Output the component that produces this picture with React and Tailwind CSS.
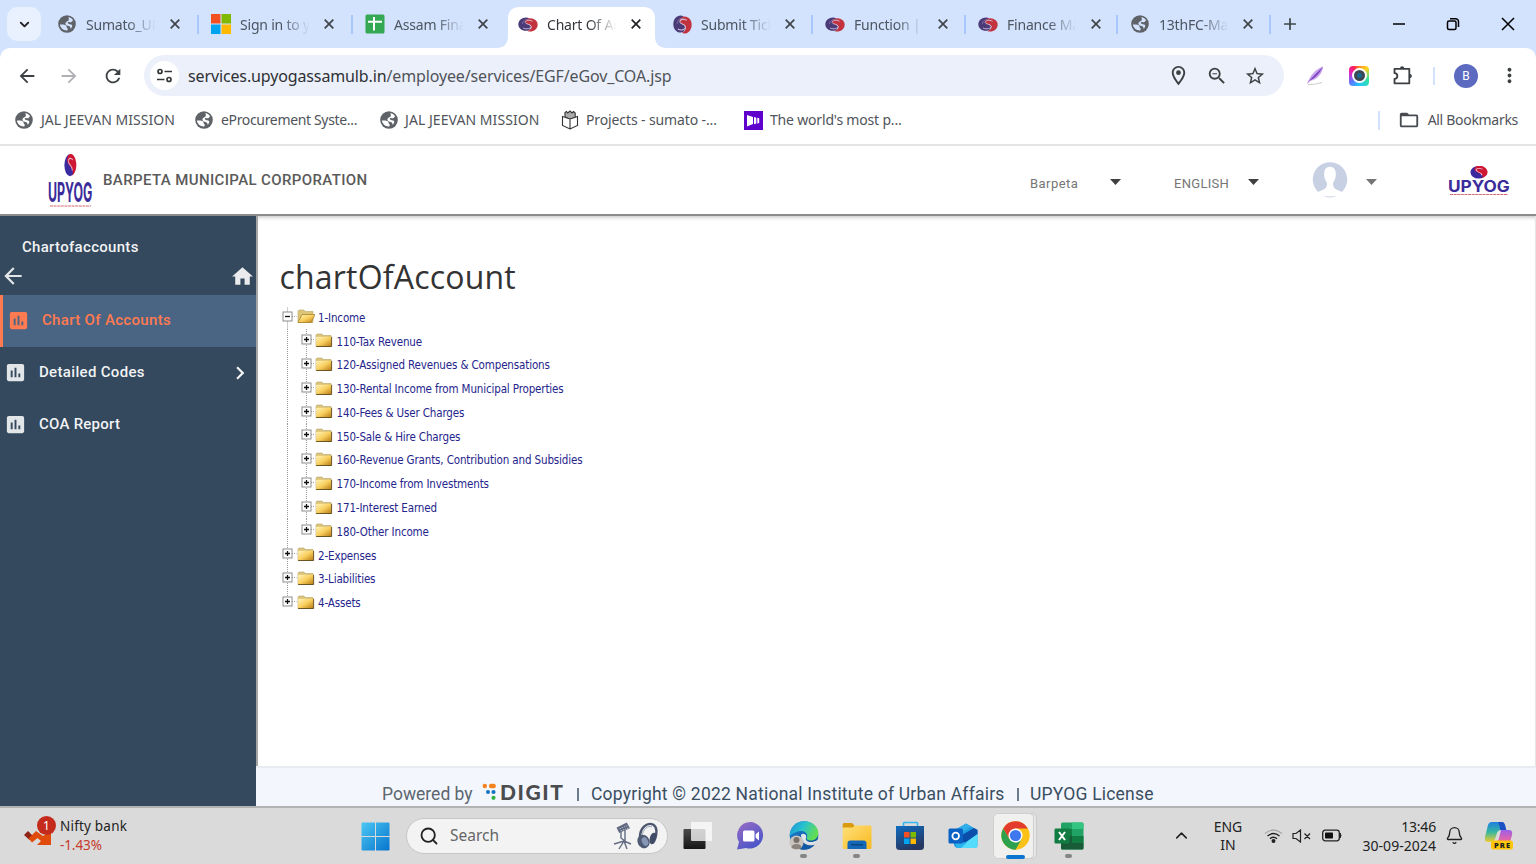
import React from 'react';
import {
  MdArrowBack, MdArrowForward, MdRefresh, MdStarBorder, MdZoomOut,
  MdOutlineLocationOn, MdFolderOpen, MdMoreVert, MdAssessment, MdHome, MdChevronRight,
} from 'react-icons/md';
import { Bell, ChevronDown, ChevronUp, Search, Plus } from 'lucide-react';

/* ---------- shared drawings ---------- */

function Globe({ bg }) {
  return (
    <svg className="size-[18px] shrink-0" viewBox="0 0 18 18">
      <circle cx="9" cy="9" r="8.800" fill="#5f6368" />
      <path d="M1.900 9.600C4 9.500 6.500 9.300 8 10.500c.8.800.3 1.700 1 2.300.9.700 1 1.600.3 2.600-3.800.3-7-2.200-7.400-5.800Z" fill={bg} />
      <path d="M10.500 2.100c2.100.5 3.700 1.700 4.700 3.400-1 .3-1.300 1.500-2.300 1.700-1.200.1-1.600-.6-2.600-.1-.9.500-.5 1.500.6 1.800 1.500.4 3 .3 3.300 1.500.2 1.200-.7 2.600-1.700 3.400.1-1.300-.3-2.200-1.400-2.500-1.800-.4-3.600-.9-3.700-2.700 0-1.300.9-1.900 1.900-2.400 1-.5 1.700-1.200 1.500-2.300Z" fill={bg} />
    </svg>
  );
}

function Swirl({ className }) {
  return (
    <svg className={className} viewBox="0 0 20 16" preserveAspectRatio="none">
      <path d="M11 1.200C8.600-.3 4.800.4 2.500 2.600-.3 5.300-.4 10 2.300 12.600c2.400 2.400 6.600 2.800 9 1.200l2-3.300-4-4.500Z" fill="#4b3a78" />
      <path d="M9.500 14.800c1.900 1.500 5.700.8 8-1.400 2.800-2.700 2.900-7.400.2-10C15.300 1 11.100.6 8.700 2.200 6.800 3.500 6.500 5.700 8.100 6.900c1.900 1.400 5 1.100 5.400 3.400.3 1.900-1.500 3.800-4 4.500Z" fill="#c2333f" />
      <path d="M14.500 4.500C11.500 2.800 7 3.600 7.200 5.900c.2 2 5.700 1.400 5.900 4.100.2 2.200-4.600 3.500-8 1.800" fill="none" stroke="#d9c6df" strokeWidth=".9" />
      <path d="M12 3.200C8 1.700 4 4.500 4.500 7.500" fill="none" stroke="#8d7fae" strokeWidth=".7" />
    </svg>
  );
}

function Microsoft() {
  return (
    <svg className="size-5" viewBox="0 0 20 20">
      <path fill="#f25022" d="M0 0h9.500v9.500H0z" />
      <path fill="#7fba00" d="M10.500 0H20v9.500h-9.500z" />
      <path fill="#00a4ef" d="M0 10.500h9.500V20H0z" />
      <path fill="#ffb900" d="M10.500 10.500H20V20h-9.500z" />
    </svg>
  );
}

function Sheets() {
  return (
    <svg className="size-5" viewBox="0 0 20 20">
      <rect x=".5" y=".5" width="19" height="19" rx="1.500" fill="#34a853" />
      <path d="M3 7.800h14M9 3v13.500" stroke="#fff" strokeWidth="2" />
    </svg>
  );
}

function Cross({ className }) {
  return (
    <svg className={className} viewBox="0 0 12 12" fill="none" stroke="currentColor" strokeWidth="1.700">
      <path d="M1.700 1.700l8.600 8.600M10.300 1.700L1.700 10.300" />
    </svg>
  );
}

/* ---------- browser tabs ---------- */

const globe = <Globe bg="#d3e2fd" />;
const swirl = <Swirl className="h-[15px] w-[20px]" />;

const tabs = [
  { w: 'w-[154px]', icon: globe, text: 'Sumato_UP', sep: true },
  { w: 'w-[154px]', icon: <Microsoft />, text: 'Sign in to y', sep: true },
  { w: 'w-[153px]', icon: <Sheets />, text: 'Assam Fina' },
  { w: 'w-[154px]', icon: swirl, text: 'Chart Of Ac', active: true },
  { w: 'w-[153px]', icon: <Swirl className="h-[19px] w-[19px]" />, text: 'Submit Tick', sep: true },
  { w: 'w-[153px]', icon: swirl, text: 'Function |', sep: true },
  { w: 'w-[152px]', icon: swirl, text: 'Finance Ma', sep: true },
  { w: 'w-[153px]', icon: globe, text: '13thFC-Ma', sep: true },
];

function Tab({ w, icon, text, active, sep }) {
  return (
    <div className={`${w} relative flex h-[48px] shrink-0 items-center pl-[14px]`}>
      {active && (
        <svg className="absolute top-0 -left-2 h-[48px] w-[174px]" viewBox="0 0 174 48">
          <path d="M0 48q12 0 12-12V19q0-12 12-12h123q12 0 12 12v17q0 12 12 12Z" fill="#fff" />
        </svg>
      )}
      <span className="relative flex w-5 shrink-0 items-center justify-center">{icon}</span>
      <span className={`relative ml-[9px] w-[83px] shrink-0 whitespace-nowrap pt-px text-[14px] tracking-[-0.2px] [mask-image:linear-gradient(90deg,#000_50%,transparent_84%)] ${active ? 'text-[#33373c]' : 'text-[#4d5561]'}`}>
        {text}
      </span>
      <Cross className={`relative -left-[0.500px] size-3 shrink-0 ${active ? 'text-[#202124]' : 'text-[#3f4449]'}`} />
      {sep && <span className="mr-[-2px] ml-auto h-[19px] w-[2px] bg-[#a8c7fa]" />}
    </div>
  );
}

function TabStrip() {
  return (
    <div className="flex h-[48px] items-center bg-[#d3e2fd] pl-[7px]">
      <div className="flex size-[34px] shrink-0 items-center justify-center rounded-[10px] bg-[#e9f0fe]">
        <ChevronDown className="size-[15px] text-[#1f1f1f]" strokeWidth={3} />
      </div>
      <div className="ml-[2px] flex">
        {tabs.map((t) => <Tab key={t.text} {...t} />)}
      </div>
      <Plus className="ml-[12px] size-[18px] text-[#3f4449]" strokeWidth={2.300} />
      <div className="mr-[21px] ml-auto flex items-center text-black">
        <svg className="size-[14px]" viewBox="0 0 14 14"><path d="M1 7h12" stroke="currentColor" strokeWidth="1.500" /></svg>
        <svg className="ml-[40px] size-[14px]" viewBox="0 0 14 14" fill="none" stroke="currentColor" strokeWidth="1.500">
          <rect x="1.500" y="4" width="8.500" height="8.500" rx="1.500" />
          <path d="M4 1.700h5.500a3 3 0 0 1 3 3V10" />
        </svg>
        <svg className="ml-[41px] size-[14px]" viewBox="0 0 14 14" fill="none" stroke="currentColor" strokeWidth="1.500"><path d="M1 1l12 12M13 1L1 13" /></svg>
      </div>
    </div>
  );
}

/* ---------- toolbar and bookmarks ---------- */

function Toolbar() {
  return (
    <div className="bg-[#d3e2fd]">
      <div className="flex h-[49px] items-center rounded-t-[10px] bg-white pt-[6px] pl-[16px]">
        <MdArrowBack className="size-[22px] text-[#3c4043]" />
        <MdArrowForward className="ml-[20px] size-[22px] text-[#aeb0b3]" />
        <MdRefresh className="ml-[22px] size-[22px] text-[#3c4043]" />
        <div className="ml-[20px] flex h-[41px] w-[1140px] items-center rounded-full bg-[#ecf0fa] pr-[18px] pl-[6px]">
          <div className="flex size-[29px] items-center justify-center rounded-full bg-white">
            <svg className="size-[17px]" viewBox="0 0 17 17" fill="none" stroke="#35383b" strokeWidth="1.700">
              <circle cx="4" cy="4.500" r="2" /><path d="M8.500 4.500H16M1 12.500h7.500" /><circle cx="13" cy="12.500" r="2" />
            </svg>
          </div>
          <span className="ml-[9px] text-[16px] tracking-[-0.13px] text-[#50545a]">
            <span className="text-[#2e3135]">services.upyogassamulb.in</span>/employee/services/EGF/eGov_COA.jsp
          </span>
          <MdOutlineLocationOn className="ml-auto size-[23px] text-[#3c4043]" />
          <MdZoomOut className="ml-[16px] size-[22px] text-[#3c4043]" />
          <MdStarBorder className="ml-[16px] size-[22px] text-[#3c4043]" />
        </div>
        <svg className="ml-[22px] size-[20px]" viewBox="0 0 20 20">
          <path d="M1 18C4 10 9 3 17 .5 17 7 11 14 4 15Z" fill="#c9a6ec" />
          <path d="M1 18C5 12 10 8 17 .5 14 7 9 12 4 14.500Z" fill="#7b3fc0" />
          <path d="M2 18.500q6 .5 14-2" stroke="#ccc" fill="none" />
        </svg>
        <div className="ml-[23px] flex size-[20px] items-center justify-center rounded-[4px] bg-[conic-gradient(#ff8a1f,#ffd21f_45deg,#35e0a0_110deg,#22c8ff_180deg,#5a7cff_230deg,#e324c4_290deg,#ff1f57_330deg,#ff8a1f)]">
          <div className="flex size-[15px] items-center justify-center rounded-full border-2 border-white bg-[#3c4752]">
            <div className="size-[5px] rounded-full bg-[#16688c]" />
          </div>
        </div>
        <svg className="ml-[23px] size-[21px]" viewBox="0 0 21 21" fill="none" stroke="#3c4043" strokeWidth="1.800">
          <path d="M2.500 3.800H17.300V18.300H2.500v-4.400c3.800-.2 3.800-5.500 0-5.700Z" strokeLinejoin="round" />
          <path d="M8 3.500a2.100 2.300 0 0 1 4.200 0ZM17.600 9a2.300 2.100 0 0 1 0 4.200Z" fill="#3c4043" stroke="none" />
        </svg>
        <span className="ml-[20px] h-[18px] w-[2px] bg-[#d3e2fd]" />
        <span className="ml-[19px] flex size-[24px] items-center justify-center rounded-full bg-[#5c6bc0] font-[Roboto] text-[12px] text-white">B</span>
        <MdMoreVert className="ml-[20px] size-[23px] text-[#3c4043]" />
      </div>
    </div>
  );
}

function Bookmarks() {
  return (
    <div className="flex h-[49px] items-center border-b-2 border-[#e4e4e4] bg-white pb-px pl-[15px] text-[14px] text-[#50545a]">
      <Globe bg="#fff" />
      <span className="ml-[8px] w-[154px] whitespace-nowrap pb-[2px] tracking-[0.03px]">JAL JEEVAN MISSION</span>
      <Globe bg="#fff" />
      <span className="ml-[8px] w-[159px] whitespace-nowrap pb-[2px] tracking-[-0.34px]">eProcurement Syste...</span>
      <Globe bg="#fff" />
      <span className="ml-[7px] w-[156px] whitespace-nowrap pb-[2px] tracking-[0.06px]">JAL JEEVAN MISSION</span>
      <svg className="h-[20px] w-[18px]" viewBox="0 0 18 20" fill="#fff" stroke="#333" strokeWidth="1.100">
        <path d="M4 7V2.500l1.500-1 1.300 1.500L9 1l2 2 1.500-1.500L14.200 3v4.500L9 9.500Z" fill="#aaa" />
        <path d="M1.500 6.500L9 9l7.500-2.500v9L9 19l-7.500-3.500ZM9 9v10" />
      </svg>
      <span className="ml-[7px] w-[158px] whitespace-nowrap pb-[2px] tracking-[-0.12px]">Projects - sumato -...</span>
      <svg className="size-[19px]" viewBox="0 0 19 19">
        <rect width="19" height="19" fill="#5f00cc" />
        <path d="M3 4l6 2v7l-6 2.500ZM10 6l2.300.8v5.700l-2.300.8ZM13.300 6.700l1.900.6v4.600l-1.900.6Z" fill="#fff" />
      </svg>
      <span className="ml-[7px] whitespace-nowrap pb-[2px] tracking-[-0.18px]">The world's most p...</span>
      <span className="ml-auto h-[19px] w-[2px] bg-[#d3e2fd]" />
      <MdFolderOpen className="ml-[18px] size-[22px] text-[#474b50]" />
      <span className="mr-[18px] ml-[8px] whitespace-nowrap pb-[2px] tracking-[-0.3px]">All Bookmarks</span>
    </div>
  );
}

/* ---------- portal ---------- */

function Triangle({ className }) {
  return <svg className={className} viewBox="0 0 11 6"><path d="M0 0h11L5.500 6Z" fill="currentColor" /></svg>;
}

function Orb() {
  return (
    <>
      <circle r="10" fill="#3a2aa0" />
      <path d="M-2-9.800A10 10 0 1 1 3 9.500C10 5-1 1-4-2-6-5-5-8-2-9.800Z" fill="#cf1633" />
      <path d="M5-5C0-8-5-5-2-2S5 1 4 5" fill="none" stroke="#e9b9d0" strokeWidth="1.300" />
    </>
  );
}

function Logo({ className, orb, textTransform, lineY, w, h }) {
  return (
    <svg className={className} viewBox={`0 0 ${w} ${h}`}>
      <g transform={orb}><Orb /></g>
      <text transform={textTransform} textLength="60" lengthAdjust="spacingAndGlyphs" fontSize="17" fontFamily="Inter, sans-serif" fontWeight="700" fill="#3a2c9a">UPYOG</text>
      <path d={`M2 ${lineY}H${w - 2}`} stroke="#d66b72" strokeWidth="1.200" strokeDasharray="3 .6" />
    </svg>
  );
}

function PortalHeader() {
  return (
    <header className="flex h-[70px] items-center border-b-2 border-[#8c8a8c] bg-white pl-[48px] font-[Roboto]">
      <Logo className="mt-[2px] h-[56px] w-[45px]" w={45} h={56} orb="translate(22 12.300) scale(.56 1.100)" textTransform="translate(0 48.500) scale(.74 1.600)" lineY={53} />
      <h1 className="ml-[10px] pt-px text-[15px] font-medium tracking-[0.38px] text-[#5a5a5a]">BARPETA MUNICIPAL CORPORATION</h1>
      <div className="ml-auto flex items-center pt-[2px] text-[13px] text-[#767676]">
        <span className="w-[80px] pt-[5px] tracking-[0.45px]">Barpeta</span>
        <Triangle className="mt-px h-[6px] w-[11px] text-[#3f3f3f]" />
        <span className="ml-[53px] w-[74px] pt-[5px] tracking-[0.3px]">ENGLISH</span>
        <Triangle className="mt-px h-[6px] w-[11px] text-[#3f3f3f]" />
        <svg className="-mt-[3px] ml-[53px] h-[36px] w-[36px]" viewBox="0 0 36 37">
          <circle cx="18" cy="18" r="17.700" fill="#c8d0e4" />
          <path d="M18 5c-4 0-6 3-6 7.500 0 3.500 1.200 6.500 2.800 8.500.3 3-.3 5.500-2.800 7L5 31v6h26v-6l-7-3c-2.500-1.500-3.100-4-2.800-7 1.600-2 2.800-5 2.800-8.500C24 8 22 5 18 5Z" fill="#fff" />
          <path d="M11 34.500q7 1.800 14 0l-3 1.500q-4 1-8 0Z" fill="#c8d0e4" />
        </svg>
        <Triangle className="mt-[2px] ml-[18px] h-[6px] w-[11px] text-[#757575]" />
        <Logo className="mr-[26px] ml-[71px] h-[30px] w-[62px]" w={62} h={30} orb="translate(30.500 6.300) scale(.8 .63)" textTransform="translate(0 26) scale(1.030 .92)" lineY={28.500} />
      </div>
    </header>
  );
}

function Sidebar() {
  return (
    <aside className="w-[256px] shrink-0 bg-[#34495e] font-[Roboto] text-[15px] font-medium text-white/95">
      <div className="h-[79px] pt-[20px]">
        <div className="pl-[22px] text-[15px] leading-[22px] tracking-[0.3px]">Chartofaccounts</div>
        <div className="flex h-[36px] items-center justify-between pr-[1px]">
          <MdArrowBack className="size-[26px] text-[#e3e6e9]" />
          <MdHome className="size-[25px] text-[#e9ebed]" />
        </div>
      </div>
      <div className="flex h-[52px] items-center border-l-[3px] border-[#fe7a51] bg-[#4a6583] pb-px pl-[4px] text-[#fe7a51]">
        <MdAssessment className="size-[23px]" />
        <span className="ml-[12px] tracking-[0.33px]">Chart Of Accounts</span>
      </div>
      <div className="flex h-[52px] items-center pb-px pl-[4px]">
        <MdAssessment className="size-[23px] text-[#e3e6e9]" />
        <span className="ml-[12px] tracking-[0.33px]">Detailed Codes</span>
        <MdChevronRight className="mr-[3px] ml-auto size-[26px]" />
      </div>
      <div className="flex h-[52px] items-center pb-px pl-[4px]">
        <MdAssessment className="size-[23px] text-[#e3e6e9]" />
        <span className="ml-[12px] tracking-[0.25px]">COA Report</span>
      </div>
    </aside>
  );
}

/* ---------- account tree ---------- */

function Guide() {
  return (
    <svg className="h-full w-[18.500px]" viewBox="0 0 18.500 23.780">
      <path d="M9.500 0V23.780" stroke="#999" strokeWidth="1" strokeDasharray="1 1" />
    </svg>
  );
}

function Toggle({ open, end, start }) {
  return (
    <svg className="h-full w-[18.500px]" viewBox="0 0 18.500 23.780">
      <path d={`M9.500 ${start ? 1.500 : 0}V${end ? 11 : 23.780}M14 10.500h4.500`} stroke="#999" strokeWidth="1" strokeDasharray="1 1" />
      <rect x="5" y="6" width="9" height="9" fill="#fff" stroke="#8c8c8c" />
      <path d={open ? 'M7 10.500h5' : 'M7 10.500h5M9.500 8v5'} stroke="#111" strokeWidth="1.300" />
    </svg>
  );
}

function Folder({ open }) {
  return (
    <svg className="h-[16px] w-[18.500px]" viewBox="0 0 18.500 16">
      <defs>
        <linearGradient id="fold" x1="0" y1="0" x2="1" y2="1">
          <stop offset="0" stopColor="#fff3b8" /><stop offset=".5" stopColor="#f9cf5e" /><stop offset="1" stopColor="#b97a12" />
        </linearGradient>
      </defs>
      <path d="M1 13.500V2.200l1-1.200h5l1.200 1.500H16v11Z" fill="#dcc478" stroke="#b8a468" strokeWidth=".6" />
      {open
        ? <path d="M1 13.500L5 5.500h13l-3.800 8Z" fill="url(#fold)" stroke="#a17a22" strokeWidth=".7" />
        : <><path d="M1.200 3.800H16.300v9.700H1.200Z" fill="url(#fold)" /><path d="M1.200 13.500H16.600V3.800" fill="none" stroke="#5d4a1c" strokeWidth=".9" /></>}
    </svg>
  );
}

const income = [
  '110-Tax Revenue', '120-Assigned Revenues & Compensations', '130-Rental Income from Municipal Properties',
  '140-Fees & User Charges', '150-Sale & Hire Charges', '160-Revenue Grants, Contribution and Subsidies',
  '170-Income from Investments', '171-Interest Earned', '180-Other Income',
];

function Row({ label, nested, open, start, end }) {
  return (
    <li className="flex h-[23.780px] items-center">
      {nested && <Guide />}
      <Toggle open={open} start={start} end={end} />
      <Folder open={open} />
      <a className="ml-[3px] whitespace-nowrap pt-px">{label}</a>
    </li>
  );
}

function Tree() {
  return (
    <ul className="font-['DejaVu_Sans_Condensed','DejaVu_Sans',sans-serif] text-[11.500px] leading-[14px] tracking-[-0.14px] text-[#25258c]">
      <Row label="1-Income" open start />
      {income.map((label, i) => <Row key={label} label={label} nested end={i === income.length - 1} />)}
      <Row label="2-Expenses" />
      <Row label="3-Liabilities" />
      <Row label="4-Assets" end />
    </ul>
  );
}

function Digit() {
  return (
    <svg className="-my-[4px] h-[28px] w-[84px]" viewBox="0 -4 84 28">
      <g fill="#f58220"><circle cx="2.800" cy="3" r="2.200" /><rect x="7" y=".8" width="6.800" height="4.400" rx="2" /></g>
      <g fill="#1673c0"><circle cx="6" cy="9" r="2" /><circle cx="11.500" cy="9" r="2.100" /></g>
      <circle cx="11.500" cy="14.800" r="2.100" fill="#2fb344" />
      <text x="18" y="16.700" textLength="63" lengthAdjust="spacing" fontFamily="Lato, sans-serif" fontWeight="900" fontSize="21" fill="#4b4c4e">DIGIT</text>
    </svg>
  );
}

function Content() {
  return (
    <div className="flex min-w-0 flex-1 flex-col">
      <main className="flex-1 border-r border-l-2 border-[#a5a5a5] border-r-[#e6e6e6] bg-white pl-[20px] shadow-[inset_0_4px_4px_-3px_#bbb]">
        <h2 className="pt-[39px] pl-[1.500px] font-['Open_Sans'] text-[32px] leading-[44px] tracking-[0.2px] text-[#333]">chartOfAccount</h2>
        <div className="pt-[6.500px]"><Tree /></div>
      </main>
      <footer className="flex h-[40px] items-center border-t-2 border-[#e8ebef] bg-[#f3f6fc] pt-[15px] pl-[126px] font-[Roboto] text-[17.500px] whitespace-nowrap text-[#3a4e61]">
        <span className="w-[100px] text-[#5c6670]">Powered by</span>
        <span className="w-[95px] pb-[3px]"><Digit /></span>
        <span className="h-[13px] w-[1.500px] bg-[#6b7c8d]" />
        <span className="ml-[12.500px] w-[426px] tracking-[0.22px]">Copyright © 2022 National Institute of Urban Affairs</span>
        <span className="h-[13px] w-[1.500px] bg-[#6b7c8d]" />
        <span className="ml-[11.500px] tracking-[0.2px]">UPYOG License</span>
      </footer>
    </div>
  );
}

/* ---------- taskbar ---------- */

function AppSlot({ children, mark }) {
  return (
    <div className="relative flex h-[56px] w-[53px] items-center justify-center">
      {children}
      {mark && <span className="absolute bottom-[6px] h-[4px] w-[7px] rounded-full bg-[#858585]" />}
    </div>
  );
}

const Windows = () => (
  <svg className="size-[29px]" viewBox="0 0 29 29">
    <defs><linearGradient id="win" gradientUnits="userSpaceOnUse" x1="0" y1="0" x2="29" y2="29"><stop stopColor="#4cc9f5" /><stop offset="1" stopColor="#0673cc" /></linearGradient></defs>
    <path d="M.5 1.500q0-1 1-1H14V14H.5ZM15 .5h12.500q1 0 1 1V14H15ZM.5 15H14v13.500H1.500q-1 0-1-1ZM15 15h13.500v12.500q0 1-1 1H15Z" fill="url(#win)" />
  </svg>
);

const SearchArt = () => (
  <svg className="ml-auto h-[30px] w-[46px]" viewBox="0 0 46 30">
    <g fill="none" stroke="#626b82" strokeWidth="1.400">
      <path d="M9 8v9l4 3M13 9v13M2 23l10-3 7 3M12 20l3 8M12 20l-5 8" />
      <path d="M5.500 7l9-4.500 2.500 4.500-9.500 4Z" fill="#59617a" />
    </g>
    <path d="M7.500 8l8-3.500M8.500 10l8-3" stroke="#b9c0cc" strokeDasharray="1.500 .8" />
    <path d="M28 16C28 7 35 1 41 3.500c4.500 2.500 4 9 2 14" fill="none" stroke="#4b556d" strokeWidth="2.400" />
    <path d="M30 15C31 8 36 4 40 6" fill="none" stroke="#98a4bb" strokeWidth="1" />
    <ellipse cx="31.500" cy="20.500" rx="6" ry="7" transform="rotate(-25 31.500 20.500)" fill="#4f5a74" />
    <ellipse cx="33" cy="20.500" rx="3" ry="4.500" transform="rotate(-25 33 20.500)" fill="#8796b4" />
    <ellipse cx="41" cy="17.500" rx="3.300" ry="6" transform="rotate(15 41 17.500)" fill="#414c66" />
  </svg>
);

const TaskView = () => (
  <svg className="size-[29px]" viewBox="0 0 29 29">
    <defs><linearGradient id="tv" x2="0" y2="1"><stop stopColor="#4b4b4b" /><stop offset="1" stopColor="#151515" /></linearGradient></defs>
    <rect x=".5" y="8" width="22" height="20" rx="1" fill="url(#tv)" />
    <rect x="8" y="1" width="21" height="19" rx="1" fill="#f8f8f8" fillOpacity=".78" />
    <path d="M23 1h5q1 0 1 1v17q0 1-1 1h-5ZM8 1h15v7H8Z" fill="#f4f4f4" />
  </svg>
);

const Chat = () => (
  <svg className="size-[29px]" viewBox="0 0 29 29">
    <defs><linearGradient id="chat" x2=".6" y2="1"><stop stopColor="#9a6cc4" /><stop offset="1" stopColor="#4a55c9" /></linearGradient></defs>
    <path d="M15 1a13.300 13.300 0 1 1-5 26L1 28.500l2-7.500A13.300 13.300 0 0 1 15 1Z" fill="url(#chat)" />
    <rect x="7" y="9.500" width="11.500" height="11" rx="1.500" fill="#fff" />
    <path d="M19.700 13.200L23 10.500v9l-3.300-2.700Z" fill="#fff" />
  </svg>
);

const Edge = () => (
  <svg className="size-[31px]" viewBox="0 0 31 31">
    <defs>
      <linearGradient id="edgeTop" x2="1" y2=".4"><stop stopColor="#1a8fd8" /><stop offset=".5" stopColor="#28c1cf" /><stop offset="1" stopColor="#62dc55" /></linearGradient>
      <linearGradient id="edgeBot" x2="1" y2="1"><stop stopColor="#1c86d8" /><stop offset="1" stopColor="#0c4a90" /></linearGradient>
    </defs>
    <circle cx="16" cy="15.500" r="14.300" fill="url(#edgeBot)" />
    <path d="M1.700 16C2 7 8 1.200 16.500 1.200 25 1.200 30.300 7 30.300 13c0 5-3.500 7.500-7.500 7.500-3 0-4.500-1-4-2.500 1.600-3-1-7-5-7-5 0-9 2-12.100 5Z" fill="url(#edgeTop)" />
    <path d="M13 14c-1 4 2 8 8 8.500 3 .2 6-.5 9-3l1 .5-2 4-2.500 1C18 27 12 22 13 14Z" fill="#dadada" />
    <path d="M13 14c-2 7 3 13 12.500 11.500C22 29 17 30.500 12 29 6 25 8 17 13 14Z" fill="#1259a5" />
    <path d="M13 16c-.5-3 5-3 5.300.5 0 1.500-.8 2.500-.3 3.500 1.500 2.500 7 3 12 0-3 5-15 6-17-4Z" fill="#dfe6ea" />
    <circle cx="8.500" cy="22.500" r="7" fill="#c9c3bd" />
    <circle cx="8.500" cy="20" r="3" fill="#77706a" /><path d="M3.500 28q0-4 5-4t5 4q-4 2.500-10 0Z" fill="#8b847d" />
  </svg>
);

const Explorer = () => (
  <svg className="size-[30px]" viewBox="0 0 30 30">
    <defs><linearGradient id="exp" x2="1" y2="1"><stop stopColor="#ffe07a" /><stop offset="1" stopColor="#f9b91e" /></linearGradient></defs>
    <path d="M.7 8V3.500q0-1.500 1.500-1.500H10l3 3-3 4Z" fill="#d99a10" />
    <path d="M.7 6.500h10l2-2H28q1.500 0 1.500 1.500v20.500q0 1.500-1.500 1.500H2.200q-1.500 0-1.500-1.500Z" fill="url(#exp)" />
    <path d="M5.500 28v-5.500Q5.500 19.500 8.500 19.500H21.500q3 0 3 3V28Z" fill="#1267b8" /><path d="M9 23.800h12" stroke="#0b457d" strokeWidth="1.500" />
  </svg>
);

const Store = () => (
  <svg className="size-[30px]" viewBox="0 0 30 30">
    <defs><linearGradient id="store" x2=".4" y2="1"><stop stopColor="#0f6cbf" /><stop offset="1" stopColor="#263760" /></linearGradient></defs>
    <path d="M8.500 6V2.200q0-.7.700-.7h12.600q.7 0 .7.700V6" fill="none" stroke="#35b8f0" strokeWidth="1.600" />
    <path d="M1 5h28v20.500q0 3.500-3.500 3.500h-21Q1 29 1 25.500Z" fill="url(#store)" />
    <path d="M9 11h5.500v5.500H9Z" fill="#f25022" /><path d="M15.500 11H21v5.500h-5.500Z" fill="#7fba00" />
    <path d="M9 17.500h5.500V23H9Z" fill="#00a4ef" /><path d="M15.500 17.500H21V23h-5.500Z" fill="#ffb900" />
  </svg>
);

const Outlook = () => (
  <svg className="size-[30px]" viewBox="0 0 30 30">
    <path d="M6 9.500L18 2.500l11.500 6.500v15q0 3-3 3H10q-3 0-4-3Z" fill="#1e9de3" />
    <path d="M6 9.500L18 2.500l5 3L9 15Z" fill="#2faeea" />
    <path d="M14 14L26 7l3.500 2v4L17 22l-3-2Z" fill="#0a4eaa" />
    <path d="M29.500 13v11.500q0 2.500-3 2.500H10Z" fill="#55dcfb" />
    <path d="M8 22v5h5l6-5.500Z" fill="#2bb3ee" />
    <rect x=".5" y="7.500" width="14.500" height="15" rx="1.500" fill="#0b62c4" />
    <circle cx="7.700" cy="15" r="3.300" fill="none" stroke="#fff" strokeWidth="1.800" />
  </svg>
);

const Chrome = () => (
  <svg className="size-[29px]" viewBox="0 0 48 48">
    <circle cx="24" cy="24" r="23.500" fill="#fbc116" />
    <path d="M24 .5A23.500 23.500 0 0 1 44.400 12.300H24L13.800 29.900 3.600 12.300A23.500 23.500 0 0 1 24 .5Z" fill="#e33b2e" />
    <path d="M3.600 12.300a23.500 23.500 0 0 0 20.400 35.200L34.200 29.900 24 35.700 13.800 29.900Z" fill="#2da14d" />
    <circle cx="24" cy="24" r="11.700" fill="#fff" /><circle cx="24" cy="24" r="9.300" fill="#3f78ee" />
  </svg>
);

const Excel = () => (
  <svg className="size-[30px]" viewBox="0 0 30 30">
    <rect x="7" y="1.500" width="22.500" height="27" rx="1.500" fill="#21a366" />
    <path d="M18 1.500h10q1.500 0 1.500 1.500v5H18Z" fill="#33c481" /><path d="M7 8h11v7H7Z" fill="#107c41" />
    <path d="M18 15h11.500v7H18Z" fill="#107c41" /><path d="M7 15h11v7h11.500v5q0 1.500-1.500 1.500H8.500Q7 28.500 7 27Z" fill="#185c37" />
    <rect x=".5" y="7.500" width="15" height="15" rx="1.200" fill="#107c41" />
    <path d="M5 11l6 8M11 11l-6 8" stroke="#fff" strokeWidth="2" />
  </svg>
);

const Copilot = () => (
  <svg className="h-[30px] w-[29px]" viewBox="0 0 29 30">
    <defs>
      <linearGradient id="cpA" x2="0" y2="1"><stop stopColor="#1d7fe0" /><stop offset=".5" stopColor="#35b7a0" /><stop offset="1" stopColor="#f3cc2e" /></linearGradient>
      <linearGradient id="cpB" x2="0" y2="1"><stop stopColor="#9b5fe8" /><stop offset="1" stopColor="#f4679a" /></linearGradient>
    </defs>
    <path d="M8 1h9q3 0 4 4l1 4h-5q-3 0-4 3l-2 6q-1 3-4 3H4q-4 0-3-5L4 4q1-3 4-3Z" fill="url(#cpA)" />
    <path d="M14 1h4q2.500 0 3.300 4l1 4h-6q-1-6-2.300-8Z" fill="#1b4fc4" />
    <path d="M17 9h8q4 0 3 5l-2 7H12q2 0 3-4Z" fill="url(#cpB)" />
    <rect x="7" y="19.500" width="22" height="9" rx="2.500" fill="#fdc60b" />
    <text x="10" y="26.800" textLength="16" fontFamily="Open Sans, sans-serif" fontWeight="800" fontSize="7.500" fill="#222">PRE</text>
  </svg>
);

function Taskbar() {
  return (
    <div className="flex h-[58px] items-center border-t-2 border-[#b2b2b2] bg-[#dadada] text-[14px] text-[#222]">
      <div className="flex w-[349px] items-center pb-[2px] pl-[23px]">
        <div className="relative h-[30px] w-[33px]">
          <svg className="absolute top-[7px] left-0 h-[19px] w-[30px]" viewBox="0 0 30 19">
            <path d="M1 8l4-4 5 5-3.500 4Z" fill="#8f2318" /><path d="M5.500 11.500L13 4l7 5 8-5v14H14l4-4-3.500-3L9 15.500Z" fill="#e04a0b" />
          </svg>
          <span className="absolute -top-[4px] right-0 flex size-[19px] items-center justify-center rounded-full bg-[#c42b1c] text-[12px] text-white">1</span>
        </div>
        <div className="ml-[4px] pt-[1px] leading-[19px]">
          <div className="text-[13.500px] tracking-[0.2px]">Nifty bank</div>
          <div className="text-[13.500px] tracking-[-0.1px] text-[#c8392b]">-1.43%</div>
        </div>
      </div>
      <AppSlot><Windows /></AppSlot>
      <div className="ml-[4px] flex h-[36px] w-[262px] items-center rounded-full border border-[#c6c6c6] bg-[#f3f3f3] pr-[9px] pl-[12px]">
        <Search className="size-[20px] text-[#222]" strokeWidth={2.200} />
        <span className="ml-[11px] text-[15.500px] text-[#666]">Search</span>
        <SearchArt />
      </div>
      <div className="ml-[3px] flex pb-px">
        <AppSlot><TaskView /></AppSlot>
        <AppSlot><Chat /></AppSlot>
        <AppSlot mark><Edge /></AppSlot>
        <AppSlot mark><Explorer /></AppSlot>
        <AppSlot><Store /></AppSlot>
        <AppSlot><Outlook /></AppSlot>
        <div className="relative flex h-[56px] w-[53px] items-center justify-center">
          <span className="absolute top-[5px] left-[9px] h-[46px] w-[39px] rounded-[5px] border border-[#cbcbcb] bg-[#e6e6e6]" />
          <span className="absolute top-[5px] left-[4px] h-[46px] w-[41px] rounded-[5px] border border-[#cfcfcf] bg-[#f0f0ef]" />
          <span className="relative"><Chrome /></span>
          <span className="absolute bottom-[5px] h-[4px] w-[19px] rounded-full bg-[#0a76d0]" />
        </div>
        <AppSlot mark><Excel /></AppSlot>
      </div>
      <div className="mr-[23px] ml-auto flex items-center pb-px">
        <ChevronUp className="size-[19px]" strokeWidth={2} />
        <div className="ml-[20px] w-[34px] text-center leading-[18px]">ENG<br />IN</div>
        <svg className="ml-[19px] h-[16px] w-[19px]" viewBox="0 0 19 16" fill="none" stroke="#222" strokeWidth="1.400">
          <path d="M1 5.500q8.500-7 17 0" stroke="#aaa" /><path d="M3.500 8q6-5 12 0M6 10.700q3.500-3 7 0" /><circle cx="9.500" cy="13" r="1.300" fill="#222" />
        </svg>
        <svg className="ml-[9px] h-[14px] w-[20px]" viewBox="0 0 20 14" fill="none" stroke="#222" strokeWidth="1.200">
          <path d="M1 4.500h3L8.500 1v12L4 9.500H1ZM12.500 4.500l5.500 5.500M18 4.500L12.500 10" />
        </svg>
        <svg className="ml-[10px] h-[13px] w-[20px]" viewBox="0 0 20 12">
          <rect x=".7" y=".7" width="16.600" height="10.600" rx="2.500" fill="none" stroke="#222" strokeWidth="1.300" /><rect x="3" y="3" width="8" height="6" rx=".8" fill="#111" /><path d="M18 3.500q2 2.500 0 5Z" fill="#222" stroke="#222" />
        </svg>
        <div className="ml-[15px] w-[79px] text-right leading-[19px] whitespace-nowrap"><div className="tracking-[-0.2px]">13:46</div><div className="tracking-[0.05px]">30-09-2024</div></div>
        <Bell className="ml-[9px] size-[19px]" strokeWidth={1.700} />
        <span className="ml-[20px]"><Copilot /></span>
      </div>
    </div>
  );
}

export default function App() {
  return (
    <div className="flex h-[864px] w-[1536px] flex-col overflow-hidden bg-white font-['Noto_Sans',sans-serif]">
      <TabStrip />
      <Toolbar />
      <Bookmarks />
      <PortalHeader />
      <div className="flex min-h-0 flex-1">
        <Sidebar />
        <Content />
      </div>
      <Taskbar />
    </div>
  );
}
